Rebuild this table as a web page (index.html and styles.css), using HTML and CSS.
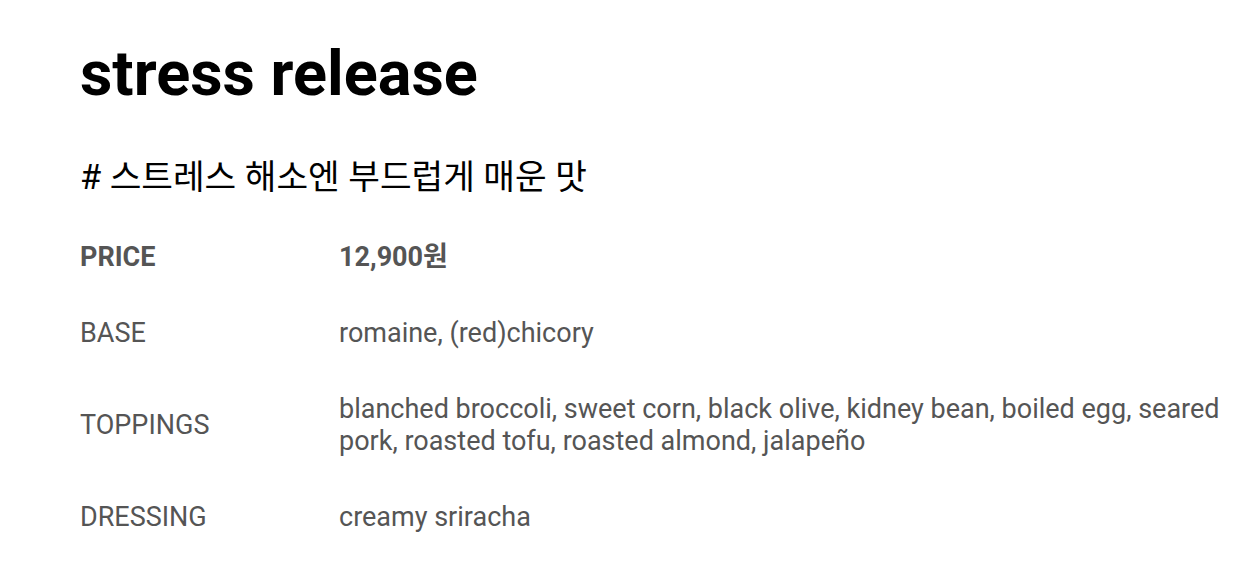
FILE: index.html
```html
<!DOCTYPE html>
<html lang="ko">
<head>
<meta charset="utf-8">
<link rel="stylesheet" href="styles.css">
</head>
<body>
<main class="menu">
  <h1 class="title">stress release</h1>
  <p class="tagline"># 스트레스 해소엔 부드럽게 매운 맛</p>
  <dl class="specs">
    <div class="row price">
      <dt>PRICE</dt>
      <dd>12,900원</dd>
    </div>
    <div class="row">
      <dt>BASE</dt>
      <dd>romaine, (red)chicory</dd>
    </div>
    <div class="row">
      <dt>TOPPINGS</dt>
      <dd>blanched broccoli, sweet corn, black olive, kidney bean, boiled egg, seared pork, roasted tofu, roasted almond, jalapeño</dd>
    </div>
    <div class="row">
      <dt>DRESSING</dt>
      <dd>creamy sriracha</dd>
    </div>
  </dl>
</main>
</body>
</html>
```
FILE: styles.css
```css
html, body {
  margin: 0;
  padding: 0;
  background: #fff;
}
body {
  font-family: Roboto, "Noto Sans CJK KR", sans-serif;
}
.menu {
  padding: 38px 20px 0 80px;
}
.title {
  margin: 0;
  font-size: 63px;
  font-weight: 700;
  line-height: 72px;
  color: #000;
}
.tagline {
  margin: 43px 0 0;
  font-size: 34.4px;
  line-height: 48px;
  color: #000;
}
.specs {
  margin: 18px 0 0;
}
.row {
  display: grid;
  grid-template-columns: 259px 1fr;
  align-items: center;
  padding: 22px 0;
  font-size: 27px;
  line-height: 32px;
  color: #555;
}
.row dt, .row dd {
  margin: 0;
}
.row.price {
  font-weight: 700;
}
```
